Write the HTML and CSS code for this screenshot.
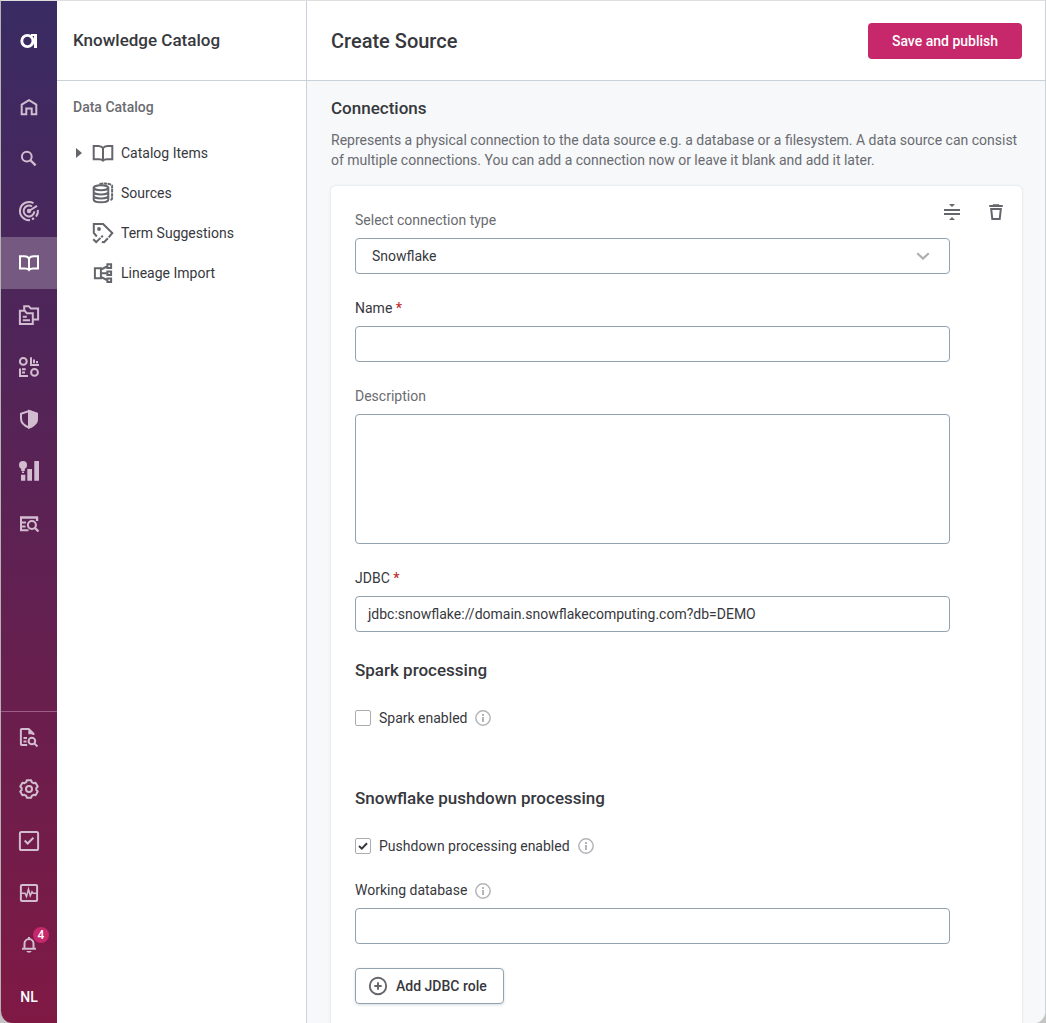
FILE: index.html
```html
<!DOCTYPE html>
<html lang="en">
<head>
<meta charset="utf-8">
<title>Create Source</title>
<link rel="stylesheet" href="styles.css">
</head>
<body>
<div class="window">
  <nav class="rail">
    <a class="rail-logo"><svg class="icon" viewBox="0 0 24 24"><circle cx="10.400" cy="12" r="5.600" stroke-width="2.900"/><path d="M18.500 5v14.100" stroke-width="3"/><path d="M14 5h5v2h-5z" fill="currentColor" stroke="none"/></svg></a>
    <a class="rail-item"><svg class="icon" viewBox="0 0 24 24"><path d="M4.700 19.300V9.600L12 5.200l7.300 4.400v9.700h-4.600v-5.800H9.300v5.800z"/></svg></a>
    <a class="rail-item"><svg class="icon" viewBox="0 0 24 24"><circle cx="9.800" cy="9.600" r="4.900"/><path d="M13.200 13l5.400 5.300" stroke-width="2.400"/></svg></a>
    <a class="rail-item"><svg class="icon" viewBox="0 0 24 24"><path d="M16.500 4.100A9.100 9.100 0 1 0 13 21.100M20.900 10.800A9.100 9.100 0 0 1 19 17.700M15 7.500A5.400 5.400 0 1 0 17.400 12.400M12 12l8-5.200"/><circle cx="12" cy="12" r="2.200" fill="currentColor" stroke="none"/><circle cx="16" cy="19.800" r="1.300" fill="currentColor" stroke="none"/></svg></a>
    <a class="rail-item active"><svg class="icon" viewBox="0 0 24 24"><path d="M12 7.300C11 5.900 9.500 5.300 7.500 5.300H3v12.200h5c2 0 3.300.6 4 1.500.7-.9 2-1.500 4-1.500h5V5.300h-4.500c-2 0-3.500.6-4.500 2zV19"/></svg></a>
    <a class="rail-item"><svg class="icon" viewBox="0 0 24 24"><path d="M2.900 7.800h4.900l2 2.500h6v10.800H2.900zM7.200 7.500V3.200h4.600l2 2.400h7.300v10.900H16M5.800 13.800h4M5.800 17.300h7.200"/></svg></a>
    <a class="rail-item"><svg class="icon" viewBox="0 0 24 24"><circle cx="6.300" cy="6.400" r="3.400"/><circle cx="17.500" cy="17.400" r="3.400"/><path d="M14 2.300v7.600h8M17 4.500v3.700M20 6v2.200M3 13.400v7.500h8M5 14.300h3.700M5 17.600h3"/></svg></a>
    <a class="rail-item"><svg class="icon" viewBox="0 0 24 24"><path d="M12 4l8 2.700v4.800c0 4.300-3.200 7.300-8 9-4.800-1.700-8-4.700-8-9V6.700z"/><path d="M12 4l8 2.700v4.800c0 4.300-3.200 7.300-8 9z" fill="currentColor"/></svg></a>
    <a class="rail-item"><svg class="icon solid" viewBox="0 0 24 24"><circle cx="6" cy="6" r="4"/><path d="M4.200 9h3.600v3H4.200zM5 12.500h2V14H5zM4 15.700h4.300v6H4zM10.300 10H15v11.700h-4.700zM17.300 2H22v19.700h-4.700z"/></svg></a>
    <a class="rail-item"><svg class="icon" viewBox="0 0 24 24"><path d="M3 6.500h18M20.100 6v4" stroke-width="2.300"/><path d="M4 6v13.300h7.500M4 11.600h5M4 15.400h4.500"/><circle cx="14.900" cy="14" r="4"/><path d="M17.800 16.900l3.700 3.600" stroke-width="2.200"/></svg></a>
    <div class="rail-bottom">
      <a class="rail-item"><svg class="icon" viewBox="0 0 24 24"><path d="M10.200 20.100H4.700a.8.800 0 0 1-.8-.8V4.700c0-.4.4-.8.800-.8h7l4.700 4.800v1.300M6.500 13h3.500M6.500 16.500h3"/><path d="M11.300 3.500v5.800h5.600z" fill="currentColor" stroke="none"/><circle cx="14.900" cy="16" r="3.300"/><path d="M17.300 18.400l3.200 3.100"/></svg></a>
      <a class="rail-item"><svg class="icon" viewBox="0 0 24 24"><path d="M14.200 3.170L14.770 5.140 16.560 6.170 18.550 5.680 20.750 9.490 19.330 10.970V13.030L20.750 14.510 18.550 18.320 16.560 17.830 14.770 18.860 14.200 20.830H9.800L9.230 18.860 7.440 17.830 5.450 18.320 3.250 14.510 4.670 13.030V10.970L3.250 9.490 5.450 5.680 7.440 6.170 9.230 5.140 9.800 3.170z" stroke-linejoin="round"/><circle cx="12" cy="12" r="3"/></svg></a>
      <a class="rail-item"><svg class="icon" viewBox="0 0 24 24"><rect x="2.900" y="2.900" width="18.200" height="18.200" rx="1.600"/><path d="M7.700 11.500l3 3 5.700-5.800"/></svg></a>
      <a class="rail-item"><svg class="icon" viewBox="0 0 24 24"><rect x="3.900" y="3.900" width="16.200" height="16.200" rx="1"/><path d="M4 12.200h4l1.500 3.300 2-7.300 1.800 6.600 1.700-4 1 1.400h4" stroke-width="1.500"/></svg></a>
      <a class="rail-item"><svg class="icon" viewBox="0 0 24 24"><path d="M5 15.700h14M7.500 15.500v-4.700a4.500 4.700 0 0 1 9 0v4.700M12 4v2"/><path d="M9.300 18.100h5.400c-.6 1.100-1.500 1.700-2.700 1.700s-2.100-.6-2.700-1.700z" fill="currentColor" stroke="none"/></svg><span class="badge">4</span></a>
      <a class="rail-item rail-user">NL</a>
    </div>
  </nav>

  <aside class="panel">
    <header class="panel-header">Knowledge Catalog</header>
    <h2 class="panel-title">Data Catalog</h2>
    <ul class="nav">
      <li class="nav-item"><i class="caret open"></i><svg class="icon" viewBox="0 0 24 24"><path d="M12 7C11 5.500 9.500 4.900 7.500 4.900H2.700v13.400H8c2 0 3.300.4 4 1.200.7-.8 2-1.200 4-1.200h5.300V4.900h-4.800c-2 0-3.500.6-4.500 2.100zv12.500"/></svg><span>Catalog Items</span></li>
      <li class="nav-item"><i class="caret"></i><svg class="icon" viewBox="0 0 24 24"><ellipse cx="10" cy="6.800" rx="7.300" ry="2.500"/><path d="M2.700 6.800v12c0 1.400 3.300 2.500 7.300 2.500s7.300-1.100 7.300-2.500v-12M2.700 11c0 1.400 3.300 2.500 7.300 2.500s7.300-1.100 7.300-2.500M2.700 15c0 1.400 3.300 2.500 7.300 2.500s7.300-1.100 7.300-2.500"/><path d="M8.500 2.900c6-.8 12.600 0 12.600 2.200v12.400c0 .8-.8 1.200-2 1.600" stroke-dasharray="3.500 .6"/></svg><span>Sources</span></li>
      <li class="nav-item"><i class="caret"></i><svg class="icon" viewBox="0 0 24 24"><path d="M5.800 15.500L2.800 12V3h9.300l9.200 9-3.600 4.300M16.900 17.300l-3.800 4-2.300-.3M2.200 18.300l3 2.800 4.300-4.200M10.300 16.200l1.500-1.500"/><circle cx="8" cy="8" r="1.900" fill="currentColor" stroke="none"/></svg><span>Term Suggestions</span></li>
      <li class="nav-item"><i class="caret"></i><svg class="icon" viewBox="0 0 24 24"><path d="M3.900 7.200h6v10h-6zM16.400 3.300h3.700v3.700h-3.700zM16.400 10.400h3.700v3.700h-3.700zM16.400 17.400h3.700v3.700h-3.700zM10 8.500l6-3M10 12.200h6M10 16l6 3"/></svg><span>Lineage Import</span></li>
    </ul>
  </aside>

  <main class="main">
    <header class="main-header">
      <h1 class="page-title">Create Source</h1>
      <button class="btn-primary">Save and publish</button>
    </header>
    <section class="content">
      <h2 class="section-title">Connections</h2>
      <p class="section-text">Represents a physical connection to the data source e.g. a database or a filesystem. A data source can consist of multiple connections. You can add a connection now or leave it blank and add it later.</p>
      <form class="card">
        <div class="card-tools">
          <svg class="icon tool" viewBox="0 0 24 24"><path d="M4 10h16M4 14h16"/><path d="M9 4h6l-3 3zM9 20h6l-3-3z" fill="currentColor" stroke="none"/></svg>
          <svg class="icon tool" viewBox="0 0 24 24"><path d="M5.200 6.100h13.600"/><path d="M9 4.800h6v1H9z" fill="currentColor" stroke-width="1"/><path d="M7.200 9.100h9.600L15.700 19H8.300z"/></svg>
        </div>
        <div class="field">
          <label class="label muted">Select connection type</label>
          <div class="input select"><span>Snowflake</span><svg class="chevron" viewBox="0 0 14 8"><path d="M1.200 1.200L7 6.600l5.800-5.400"/></svg></div>
        </div>
        <div class="field">
          <label class="label">Name <b class="required">*</b></label>
          <div class="input"></div>
        </div>
        <div class="field">
          <label class="label muted">Description</label>
          <div class="input area"></div>
        </div>
        <div class="field">
          <label class="label">JDBC <b class="required">*</b></label>
          <div class="input"><span>jdbc:snowflake://domain.snowflakecomputing.com?db=DEMO</span></div>
        </div>
        <h3 class="group-title">Spark processing</h3>
        <div class="check-row spark">
          <span class="checkbox"></span><span>Spark enabled</span>
          <svg class="info" viewBox="0 0 16 16"><circle cx="8" cy="8" r="7.200"/><path d="M8 7v5M8 4v1.900" stroke-width="2"/></svg>
        </div>
        <h3 class="group-title">Snowflake pushdown processing</h3>
        <div class="check-row">
          <span class="checkbox"><svg class="tick" viewBox="0 0 14 14"><path d="M3 7l2.800 2.700L11 4.200"/></svg></span><span>Pushdown processing enabled</span>
          <svg class="info" viewBox="0 0 16 16"><circle cx="8" cy="8" r="7.200"/><path d="M8 7v5M8 4v1.900" stroke-width="2"/></svg>
        </div>
        <div class="field">
          <label class="label with-info">Working database
            <svg class="info" viewBox="0 0 16 16"><circle cx="8" cy="8" r="7.200"/><path d="M8 7v5M8 4v1.900" stroke-width="2"/></svg></label>
          <div class="input"></div>
        </div>
        <button type="button" class="btn-secondary"><svg class="plus" viewBox="0 0 20 20"><circle cx="10" cy="10" r="8.200"/><path d="M10 6.300v7.400M6.300 10h7.400"/></svg>Add JDBC role</button>
      </form>
    </section>
  </main>
</div>
</body>
</html>
```

FILE: styles.css
```css
* { box-sizing: border-box; }

body {
  margin: 0;
  background: #c4c4c4;
  color: #37383d;
  font: 400 14px/20px Roboto, "Liberation Sans", sans-serif;
}

h1, h2, h3, p, ul { margin: 0; padding: 0; }

.window {
  display: flex;
  height: 1023px;
  overflow: hidden;
  border: 1px solid #ccd3d7;
  border-top-color: #dedede;
  border-left-color: #b2b2b2;
  border-bottom: 0;
  border-radius: 0 0 12px 12px;
  background: #fff;
}

.icon {
  flex: none;
  width: 24px;
  height: 24px;
  fill: none;
  stroke: currentColor;
  stroke-width: 2;
}
.icon.solid { fill: currentColor; stroke: none; }

.rail {
  display: flex;
  flex: none;
  flex-direction: column;
  width: 56px;
  background: linear-gradient(#392b63, #7f1944);
  color: #d2bccf;
}
.rail-logo,
.rail-item {
  position: relative;
  display: flex;
  flex: none;
  align-items: center;
  justify-content: center;
  height: 52px;
}
.rail-logo { height: 80px; color: #fff; }
.rail-item.active { background: #765980; color: #fff; }
.rail-bottom { margin-top: auto; border-top: 1px solid #9a5e87; }
.rail-bottom .rail-item:first-child { height: 50px; margin-bottom: 1px; }
.rail-user { color: #fff; font-weight: 500; }
.badge {
  position: absolute;
  top: 8px;
  left: 32px;
  width: 16px;
  height: 16px;
  border-radius: 50%;
  background: #c6286b;
  color: #fff;
  font-size: 12px;
  font-weight: 500;
  line-height: 16px;
  text-align: center;
}

.panel {
  flex: none;
  width: 250px;
  border-right: 1px solid #c9d2d8;
}
.panel-header {
  display: flex;
  align-items: center;
  height: 80px;
  padding: 0 0 1px 16px;
  border-bottom: 1px solid #c9d2d8;
  font-size: 17px;
  font-weight: 500;
}
.panel-title {
  padding: 16px 16px;
  color: #6a6b70;
  font-size: 14px;
  font-weight: 500;
  line-height: 20px;
}
.nav { list-style: none; }
.nav-item {
  display: flex;
  align-items: center;
  height: 40px;
  padding-left: 19px;
}
.nav-item .icon { margin: 0 6px 0 9px; color: #65666b; }
.caret {
  width: 6px;
  height: 10px;
  background: #65666b;
  clip-path: polygon(0 0, 100% 50%, 0 100%);
}
.caret:not(.open) { visibility: hidden; }

.main { flex: 1; min-width: 0; background: #f6f8fa; }
.main-header {
  display: flex;
  align-items: center;
  justify-content: space-between;
  height: 80px;
  padding: 0 23px 0 24px;
  border-bottom: 1px solid #c9d2d8;
  background: #fff;
}
.page-title { font-size: 20px; font-weight: 500; }
.btn-primary {
  width: 154px;
  height: 36px;
  padding: 0;
  border: 0;
  border-radius: 4px;
  background: #c6286b;
  color: #fff;
  font: inherit;
  font-weight: 500;
}

.content { padding: 15px 23px 0 24px; }
.section-title { font-size: 17px; font-weight: 500; line-height: 24px; }
.section-text { margin: 10px 0 16px; color: #6a6b70; }

.card {
  position: relative;
  height: 900px;
  padding: 24px;
  border-radius: 5px;
  background: #fff;
  box-shadow: 0 0 3px rgba(60, 80, 100, 0.16);
}
.card-tools {
  position: absolute;
  top: 14px;
  right: 14px;
  display: flex;
  gap: 20px;
  color: #65666b;
}
.field { width: 595px; margin-bottom: 24px; }
.label { display: block; margin-bottom: 8px; }
.muted { color: #6a6b70; }
.required { color: #c22f2f; font-weight: 500; }
.with-info { display: flex; align-items: center; }
.with-info .info { position: relative; top: 1px; }
.input {
  display: flex;
  align-items: center;
  height: 36px;
  padding: 0 12px;
  border: 1px solid #92a3af;
  border-radius: 4px;
  background: #fff;
}
.select { justify-content: space-between; padding: 0 19px 0 16px; }
.area { height: 130px; }
.chevron { width: 14px; height: 8px; fill: none; stroke: #acaeb2; stroke-width: 2.1; }

.group-title { font-size: 17px; font-weight: 500; line-height: 28px; }
.check-row { display: flex; align-items: center; height: 20px; margin: 24px 0; }
.check-row.spark { margin-bottom: 56px; }
.checkbox {
  width: 16px;
  height: 16px;
  margin-right: 8px;
  border: 1px solid #aaacb0;
  border-radius: 2px;
}
.tick { display: block; width: 14px; height: 14px; fill: none; stroke: #37383d; stroke-width: 2; }
.info { width: 16px; height: 16px; margin-left: 8px; fill: none; stroke: #b4b5b8; stroke-width: 1.5; }

.btn-secondary {
  display: flex;
  align-items: center;
  width: 149px;
  height: 36px;
  padding: 0 0 0 12px;
  border: 1px solid #92a3af;
  border-radius: 4px;
  background: #fff;
  box-shadow: 0 1px 3px rgba(60, 80, 100, 0.2);
  color: #37383d;
  font: inherit;
  font-weight: 500;
}
.plus { width: 20px; height: 20px; margin-right: 8px; fill: none; stroke: #65666b; stroke-width: 1.9; }
```
